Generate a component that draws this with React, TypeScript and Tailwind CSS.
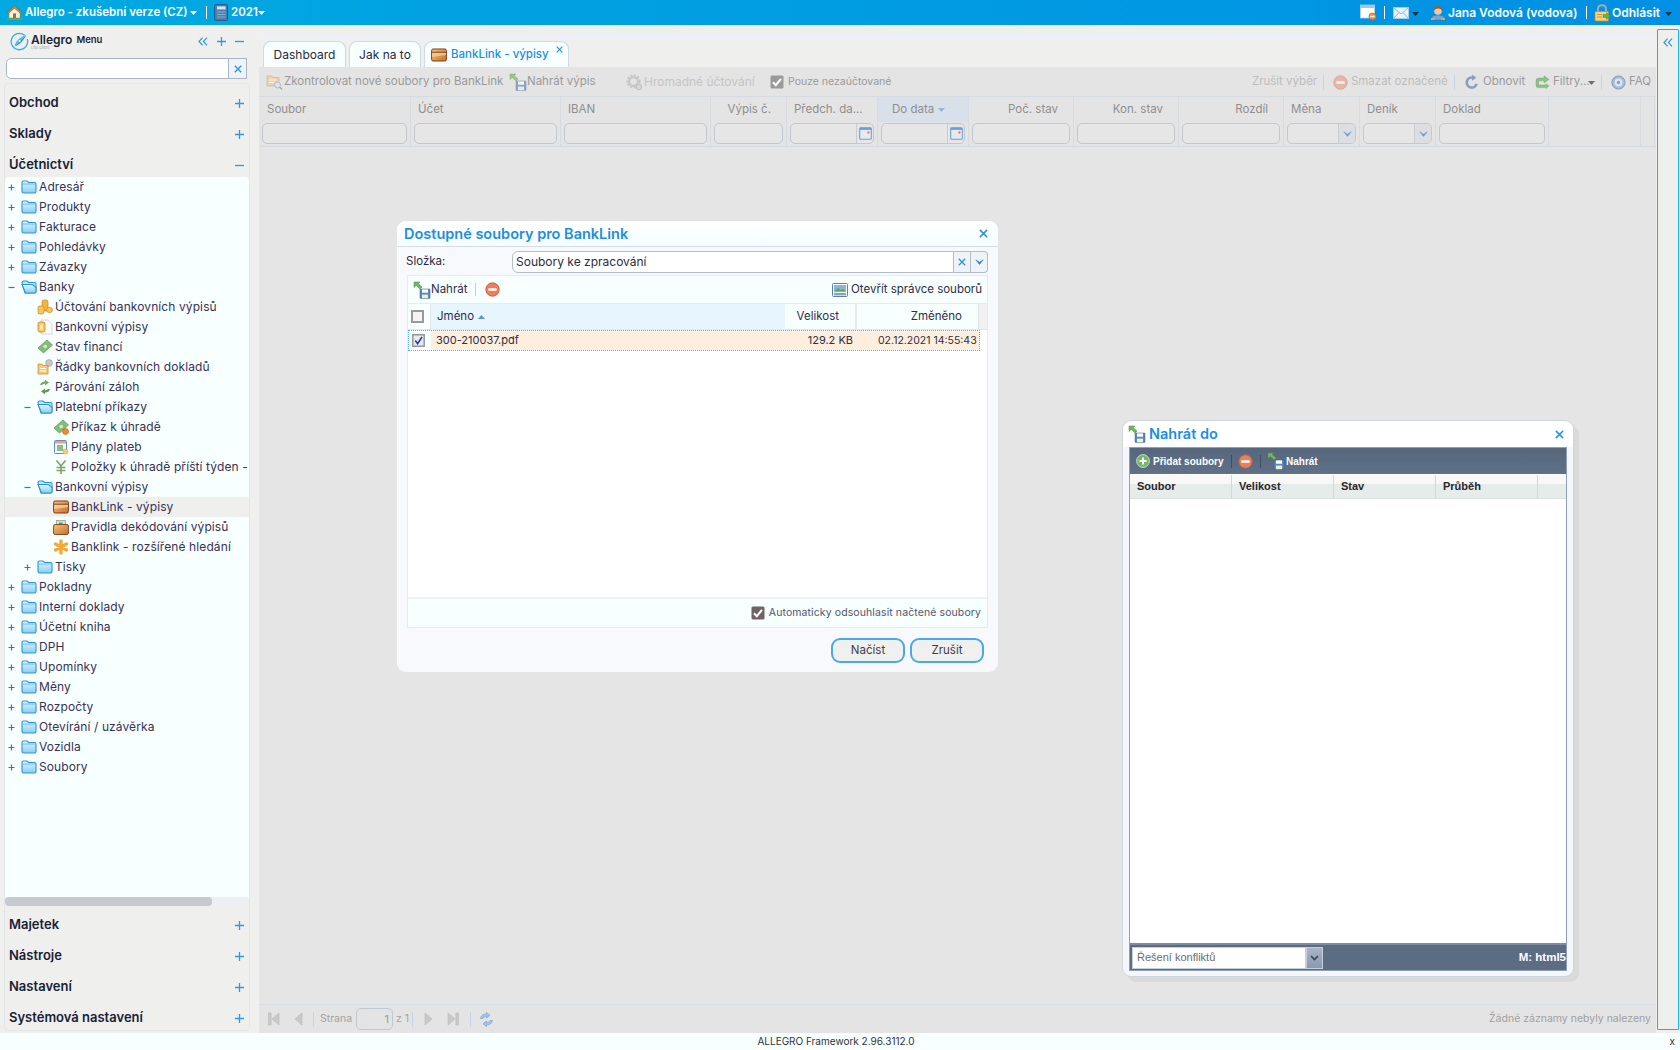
import React from "react";

const Defs = () => (
  <svg width="0" height="0" className="absolute">
    <defs>
      <linearGradient id="fold" x1="0" y1="0" x2="0" y2="1">
        <stop offset="0" stopColor="#e6f6fe" />
        <stop offset="1" stopColor="#85cdf2" />
      </linearGradient>
      <linearGradient id="chest" x1="0" y1="0" x2="1" y2="1">
        <stop offset="0" stopColor="#f3c27c" />
        <stop offset="1" stopColor="#c9702f" />
      </linearGradient>
    </defs>
  </svg>
);

const Folder = () => (
  <svg width="16" height="14" viewBox="0 0 16 14" className="shrink-0">
    <path d="M1 2.5Q1 1 2.5 1H6L7.5 2.5H13.5Q15 2.5 15 4V11.5Q15 13 13.5 13H2.5Q1 13 1 11.5Z" fill="url(#fold)" stroke="#2b96d0" strokeWidth="1.1" />
    <path d="M1.5 4H14.5" stroke="#4fb2e4" strokeWidth="0.8" />
  </svg>
);
const FolderOpen = () => (
  <svg width="16" height="14" viewBox="0 0 16 14" className="shrink-0">
    <path d="M1 2.5Q1 1 2.5 1H6L7.5 2.5H13.5Q15 2.5 15 4V11.5Q15 13 13.5 13H4Z" fill="#bfe6fa" stroke="#2b96d0" strokeWidth="1.1" />
    <path d="M1 4.5H11.5L15 7.5V11.5Q15 13 13.5 13H4.5Z" fill="url(#fold)" stroke="#2b96d0" strokeWidth="1.1" />
  </svg>
);
const Coins = () => (
  <svg width="16" height="16" viewBox="0 0 16 16" className="shrink-0">
    <rect x="5" y="1" width="6" height="11" rx="2" fill="#f2b640" stroke="#c98b20" strokeWidth="0.7" />
    <rect x="1" y="7" width="6" height="8" rx="2" fill="#f5c65c" stroke="#c98b20" strokeWidth="0.7" />
    <ellipse cx="12.5" cy="11" rx="3" ry="2.6" fill="#f5c65c" stroke="#c98b20" strokeWidth="0.7" />
  </svg>
);
const DocCoin = () => (
  <svg width="16" height="16" viewBox="0 0 16 16" className="shrink-0">
    <path d="M4 1H11L15 5V15H4Z" fill="#fbfbf8" stroke="#cfcfcf" strokeWidth="0.8" />
    <rect x="1" y="3" width="7" height="10" rx="2" fill="#f6c76a" stroke="#d58f25" strokeWidth="0.9" />
    <rect x="3.2" y="5.5" width="2.6" height="5" fill="#fff0c4" />
  </svg>
);
const Money = ({ badge }: { badge?: boolean }) => (
  <svg width="16" height="16" viewBox="0 0 16 16" className="shrink-0">
    <path d="M1 9L10 1L15.5 6L6.5 14Z" fill="#86bc7a" stroke="#5d9a55" strokeWidth="0.7" />
    <circle cx="8.2" cy="7.5" r="1.8" fill="#d7ecc9" />
    {badge && <circle cx="12.5" cy="12.5" r="3" fill="#ef8b33" stroke="#b85f16" strokeWidth="0.6" />}
  </svg>
);
const RowsDoc = () => (
  <svg width="16" height="16" viewBox="0 0 16 16" className="shrink-0">
    <circle cx="12" cy="4" r="3.4" fill="#c8c8c8" stroke="#9a9a9a" strokeWidth="0.6" />
    <path d="M1 5H5L6 6.5H11V15H1Z" fill="#f8c878" stroke="#d58f25" strokeWidth="0.8" />
    <path d="M3 9.5H9M3 12H9" stroke="#fff" strokeWidth="1" />
  </svg>
);
const Swap = () => (
  <svg width="16" height="16" viewBox="0 0 16 16" className="shrink-0">
    <path d="M3 6Q4 2.5 8 2.5V0.8L12 3.6L8 6.4V4.8Q6 4.8 5 6Z" fill="#6fae5b" />
    <path d="M13 10Q12 13.5 8 13.5V15.2L4 12.4L8 9.6V11.2Q10 11.2 11 10Z" fill="#5d9a55" />
  </svg>
);
const PlanIcon = () => (
  <svg width="16" height="16" viewBox="0 0 16 16" className="shrink-0">
    <rect x="1.5" y="1.5" width="12" height="13" rx="1" fill="#f4f8fc" stroke="#5d8fc8" />
    <rect x="2" y="2" width="11" height="2.5" fill="#f0a35c" />
    <rect x="4" y="6" width="6" height="6" fill="#8db98d" />
    <circle cx="12.5" cy="12.5" r="2.6" fill="#f5cf72" stroke="#d8a334" strokeWidth="0.5" />
  </svg>
);
const Yen = () => (
  <svg width="16" height="16" viewBox="0 0 16 16" className="shrink-0">
    <path d="M3.5 1.5L8 7L12.5 1.5M8 7V15M3.5 8.5H12.5M3.5 11.5H12.5" stroke="#7fa56f" strokeWidth="1.7" fill="none" />
  </svg>
);
const Chest = () => (
  <svg width="16" height="14" viewBox="0 0 16 14" className="shrink-0">
    <rect x="0.6" y="1" width="14.8" height="12" rx="1.5" fill="url(#chest)" stroke="#7a3f18" strokeWidth="1" />
    <path d="M0.8 4.2H15.2" stroke="#7a3f18" strokeWidth="0.9" />
    <path d="M1 5H15V7L1 9Z" fill="#f7d59e" opacity="0.7" />
  </svg>
);
const ChestDoc = () => (
  <svg width="16" height="15" viewBox="0 0 16 15" className="shrink-0">
    <rect x="3.5" y="0.6" width="9" height="7" fill="#cfe3ce" stroke="#7e9a86" strokeWidth="0.7" />
    <rect x="6" y="2.5" width="3.5" height="2.6" fill="#5a9a5a" />
    <rect x="0.6" y="4.5" width="14.8" height="10" rx="1.5" fill="url(#chest)" stroke="#7a3f18" strokeWidth="0.9" />
  </svg>
);
const Star = () => (
  <svg width="16" height="16" viewBox="0 0 16 16" className="shrink-0">
    <g stroke="#f3a93c" strokeWidth="3.4" strokeLinecap="round">
      <path d="M8 2V14M2.5 5L13.5 11M2.5 11L13.5 5" />
    </g>
  </svg>
);
const Upload = ({ dim }: { dim?: boolean }) => (
  <svg width="18" height="18" viewBox="0 0 18 18" className="shrink-0" opacity={dim ? 0.65 : 1}>
    <path d="M1 1H7L5.2 2.6L9 6L7 8L3.2 4.4L1 6.5Z" fill="#74b35f" stroke="#4f8f42" strokeWidth="0.5" />
    <rect x="7" y="8" width="10" height="9.4" rx="0.6" fill="#5b88bd" stroke="#39608f" strokeWidth="0.5" />
    <rect x="9" y="8.4" width="6" height="3.3" fill="#fff" />
    <rect x="9" y="13.6" width="6" height="3.6" fill="#eef0d5" />
  </svg>
);
const MinusCircle = ({ dim }: { dim?: boolean }) => (
  <svg width="15" height="15" viewBox="0 0 15 15" className="shrink-0" opacity={dim ? 0.45 : 1}>
    <circle cx="7.5" cy="7.5" r="6.7" fill="#e9805d" stroke="#cb5a3c" strokeWidth="0.9" />
    <rect x="3.3" y="6.2" width="8.4" height="2.6" rx="0.6" fill="#fff" />
  </svg>
);
const PlusCircle = () => (
  <svg width="14" height="14" viewBox="0 0 14 14" className="shrink-0">
    <circle cx="7" cy="7" r="6.4" fill="#76b56a" stroke="#cfe8c8" strokeWidth="0.9" />
    <path d="M7 3.4V10.6M3.4 7H10.6" stroke="#fff" strokeWidth="2" />
  </svg>
);
const Check = ({ color = "#8b8b8b", className = "" }: { color?: string; className?: string }) => (
  <svg width="14" height="14" viewBox="0 0 14 14" className={"shrink-0 " + className}>
    <rect x="0.5" y="0.5" width="13" height="13" rx="1.5" fill={color} />
    <path d="M3 7.3L5.8 10.2L11 3.8" stroke="#fff" strokeWidth="2.1" fill="none" />
  </svg>
);
const Caret = ({ color = "#fff", className = "" }: { color?: string; className?: string }) => (
  <svg width="7" height="4" viewBox="0 0 7 4" className={"shrink-0 " + className}>
    <path d="M0 0H7L3.5 4Z" fill={color} />
  </svg>
);
const XMark = ({ size = 10, color = "#2b94dc" }: { size?: number; color?: string }) => (
  <svg width={size} height={size} viewBox="0 0 10 10" className="shrink-0">
    <path d="M1 1L9 9M9 1L1 9" stroke={color} strokeWidth="1.7" />
  </svg>
);
const Plus = ({ size = 9, w = 1.3 }: { size?: number; w?: number }) => (
  <svg width={size} height={size} viewBox="0 0 9 9" className="shrink-0">
    <path d="M4.5 0V9M0 4.5H9" stroke="#2f9ae0" strokeWidth={w} />
  </svg>
);
const TreePlus = () => (
  <svg width="7" height="7" viewBox="0 0 7 7" className="shrink-0">
    <path d="M3.5 0.5V6.5M0.5 3.5H6.5" stroke="#1f7fd0" strokeWidth="1.2" />
  </svg>
);
const TreeMinus = () => (
  <svg width="7" height="7" viewBox="0 0 7 7" className="shrink-0">
    <path d="M0.5 3.5H6.5" stroke="#1f7fd0" strokeWidth="1.2" />
  </svg>
);
const Minus = ({ size = 9, w = 1.3 }: { size?: number; w?: number }) => (
  <svg width={size} height={size} viewBox="0 0 9 9" className="shrink-0">
    <path d="M0 4.5H9" stroke="#2f9ae0" strokeWidth={w} />
  </svg>
);
const DoubleLeft = () => (
  <svg width="10" height="9" viewBox="0 0 10 9" className="shrink-0">
    <path d="M4.6 0.6L1 4.5L4.6 8.4M9 0.6L5.4 4.5L9 8.4" stroke="#2f9ae0" strokeWidth="1.2" fill="none" />
  </svg>
);
const Down = ({ color = "#2b80cc" }: { color?: string }) => (
  <svg width="9" height="6" viewBox="0 0 9 6" className="shrink-0">
    <path d="M0.8 0.8L4.5 3.2L8.2 0.8L4.5 5.4Z" fill={color} stroke={color} strokeWidth="0.6" />
  </svg>
);
const Home = () => (
  <svg width="17" height="17" viewBox="0 0 17 17" className="shrink-0">
    <path d="M3 8V14H14V8L8.5 3Z" fill="#fbf1dd" stroke="#b98650" strokeWidth="0.6" />
    <path d="M0.8 9L8.5 1.6L16.2 9L14.6 9.6L8.5 4.2L2.4 9.6Z" fill="#d8803a" stroke="#98521d" strokeWidth="0.5" />
    <rect x="7" y="9.4" width="3" height="4.6" fill="#a66a35" />
    <path d="M1 15H16" stroke="#6aa84f" strokeWidth="1.8" />
  </svg>
);
const Book = () => (
  <svg width="14" height="17" viewBox="0 0 14 17" className="shrink-0">
    <rect x="0.6" y="0.6" width="12.8" height="15.8" rx="1" fill="#4e7fb0" stroke="#1e4a76" strokeWidth="0.8" />
    <rect x="3" y="2.4" width="8.6" height="3" fill="#d6e5f2" />
    <path d="M3 8H11.5M3 10.5H11.5M3 13H11.5" stroke="#8db2d4" strokeWidth="0.9" />
  </svg>
);
const Win = () => (
  <svg width="17" height="17" viewBox="0 0 17 17" className="shrink-0">
    <rect x="0.5" y="1" width="14" height="13" fill="#fff" stroke="#c9d6e2" strokeWidth="0.7" />
    <rect x="0.5" y="1" width="14" height="3" fill="#9ec7ea" />
    <circle cx="12.5" cy="12.5" r="3.6" fill="#ec8a3a" stroke="#b75f17" strokeWidth="0.5" />
    <rect x="10.3" y="11.7" width="4.4" height="1.6" fill="#fff" />
  </svg>
);
const Mail = () => (
  <svg width="16" height="12" viewBox="0 0 16 12" className="shrink-0">
    <rect x="0.5" y="0.5" width="15" height="11" fill="#e9f3fb" stroke="#a8cbe8" />
    <path d="M0.8 0.8L8 7L15.2 0.8M0.8 11.2L6 5.5M15.2 11.2L10 5.5" stroke="#7fb0dc" strokeWidth="0.9" fill="none" />
  </svg>
);
const UserI = () => (
  <svg width="16" height="16" viewBox="0 0 16 16" className="shrink-0">
    <path d="M1 15Q1 10 8 10Q15 10 15 15Z" fill="#6fa6dc" stroke="#2e6fb1" strokeWidth="0.5" />
    <circle cx="8" cy="6" r="3.8" fill="#f3c9a5" />
    <path d="M3.8 5.5Q4 1 8 1Q12 1 12.2 5.5Q10 3.2 8 3.6Q6 3.6 3.8 5.5Z" fill="#a55a25" />
    <path d="M1 15H5V13H1ZM11 15H15V13H11Z" fill="#e7a14e" />
  </svg>
);
const Lock = () => (
  <svg width="17" height="18" viewBox="0 0 17 18" className="shrink-0">
    <path d="M4 8V5Q4 1.2 8 1.2Q12 1.2 12 5V8" fill="none" stroke="#a9a9a9" strokeWidth="2" />
    <rect x="1" y="7.5" width="13.5" height="9.5" rx="1" fill="#f6d37c" stroke="#bd8c1f" strokeWidth="0.7" />
    <path d="M3 10.5H8M3 13H8" stroke="#bd8c1f" strokeWidth="0.8" />
    <path d="M9 10.5H12.5V8.5L16.5 12L12.5 15.5V13.5H9Z" fill="#65ad4f" stroke="#3f8131" strokeWidth="0.4" />
  </svg>
);
const Logo = () => (
  <svg width="19" height="19" viewBox="0 0 19 19" className="shrink-0">
    <path d="M14.6 3.2A8.2 8.2 0 1 0 17.2 7" fill="none" stroke="#2db2e8" strokeWidth="1.3" />
    <path d="M4.5 14.5L16.5 2.5Q13 9.5 8.5 12.5Q6.5 13.8 4.5 14.5Z" fill="#1696d6" />
    <path d="M16.5 2.5Q9.5 5.5 6.5 9.5Q5 11.8 4.5 14.5Z" fill="#57b9e6" />
    <circle cx="9.6" cy="9" r="1" fill="#fff" />
  </svg>
);
const FolderSearch = () => (
  <svg width="17" height="17" viewBox="0 0 17 17" className="shrink-0" opacity="0.6">
    <path d="M1 2H6L7 3.5H13V12H1Z" fill="#f2c98b" stroke="#c7935a" strokeWidth="0.7" />
    <path d="M3 6H10M3 8.5H8" stroke="#fff" strokeWidth="1.1" />
    <circle cx="11.5" cy="11" r="3" fill="#d6e6f2" stroke="#7d9cb8" strokeWidth="0.9" />
    <path d="M13.6 13L16 15.5" stroke="#7d8a96" strokeWidth="1.5" />
  </svg>
);
const Gear = () => (
  <svg width="17" height="17" viewBox="0 0 17 17" className="shrink-0" opacity="0.6">
    <circle cx="7.5" cy="7.5" r="4.4" fill="none" stroke="#b4b4b4" strokeWidth="2.2" />
    <circle cx="7.5" cy="7.5" r="6.2" fill="none" stroke="#b4b4b4" strokeWidth="1.8" strokeDasharray="2 1.6" />
    <circle cx="13" cy="13" r="2.8" fill="#cfcfcf" stroke="#a8a8a8" strokeWidth="1" />
  </svg>
);
const Refresh = () => (
  <svg width="15" height="16" viewBox="0 0 15 16" className="shrink-0">
    <path d="M8.6 3.6A5 5 0 1 0 12.6 9.8" fill="none" stroke="#8b9fbb" strokeWidth="2.6" />
    <path d="M8 0.6L12.4 3.8L8 6.8Z" fill="#8b9fbb" />
  </svg>
);
const Filter = () => (
  <svg width="15" height="15" viewBox="0 0 15 15" className="shrink-0">
    <path d="M1 9V6Q1 3 4 3H9V0.8L14 4.4L9 8V5.8H5Q3.6 5.8 3.6 7V10H11V8.8L14 11L11 13.5V12.6H3Q1 12.6 1 10Z" fill="#8cc184" stroke="#6ba462" strokeWidth="0.4" />
  </svg>
);
const Faq = () => (
  <svg width="15" height="15" viewBox="0 0 15 15" className="shrink-0">
    <circle cx="7.5" cy="7.5" r="6.6" fill="#a6bdd7" stroke="#7e9abb" strokeWidth="0.9" />
    <circle cx="7.5" cy="7.5" r="4" fill="#dbe5f0" />
    <circle cx="7.5" cy="7.5" r="1.7" fill="#86a2c2" />
  </svg>
);
const CalBtn = () => (
  <svg width="13" height="13" viewBox="0 0 13 13" className="shrink-0">
    <rect x="0.7" y="0.7" width="11.6" height="11.6" rx="1" fill="#e7eaee" stroke="#6d9ddb" strokeWidth="1.1" />
    <rect x="0.7" y="0.7" width="11.6" height="2.2" fill="#6d9ddb" />
    <circle cx="9.4" cy="5.5" r="1.2" fill="#e08b52" />
  </svg>
);
const Picture = () => (
  <svg width="16" height="14" viewBox="0 0 16 14" className="shrink-0">
    <rect x="0.5" y="0.5" width="15" height="13" rx="1" fill="#fff" stroke="#5b83a8" />
    <rect x="2" y="2" width="12" height="6.6" fill="#7fb6e2" />
    <path d="M2 8.6L6 5L9 7L11 5.8L14 8.6Z" fill="#6da256" />
    <rect x="2" y="9.8" width="12" height="2.6" fill="#8aa3ba" />
  </svg>
);
const PagerFirst = ({ flip }: { flip?: boolean }) => (
  <svg width="12" height="14" viewBox="0 0 12 14" className={"shrink-0 " + (flip ? "-scale-x-100" : "")}>
    <rect x="0.5" y="1" width="2.6" height="12" fill="#c9c9c9" stroke="#b5b5b5" strokeWidth="0.5" />
    <path d="M11 1V13L4 7Z" fill="#c9c9c9" stroke="#b5b5b5" strokeWidth="0.5" />
  </svg>
);
const PagerPrev = ({ flip }: { flip?: boolean }) => (
  <svg width="9" height="14" viewBox="0 0 9 14" className={"shrink-0 " + (flip ? "-scale-x-100" : "")}>
    <path d="M8 1V13L1 7Z" fill="#c9c9c9" stroke="#b5b5b5" strokeWidth="0.5" />
  </svg>
);
const PagerRefresh = () => (
  <svg width="15" height="15" viewBox="0 0 15 15" className="shrink-0">
    <path d="M1.5 6.5Q2.5 2 7.5 2V0.5L11 3.2L7.5 6V4.2Q5 4.2 4 6.5Z" fill="#a8c4e6" stroke="#6f9ccf" strokeWidth="0.6" />
    <path d="M13.5 8.5Q12.5 13 7.5 13V14.5L4 11.8L7.5 9V10.8Q10 10.8 11 8.5Z" fill="#a8c4e6" stroke="#6f9ccf" strokeWidth="0.6" />
  </svg>
);

type Node = { t: string; lvl: 0 | 1 | 2; exp?: "+" | "-"; icon: React.ReactNode; sel?: boolean };
const F = <Folder />;
const FO = <FolderOpen />;
const tree: Node[] = [
  { t: "Adresář", lvl: 0, exp: "+", icon: F },
  { t: "Produkty", lvl: 0, exp: "+", icon: F },
  { t: "Fakturace", lvl: 0, exp: "+", icon: F },
  { t: "Pohledávky", lvl: 0, exp: "+", icon: F },
  { t: "Závazky", lvl: 0, exp: "+", icon: F },
  { t: "Banky", lvl: 0, exp: "-", icon: FO },
  { t: "Účtování bankovních výpisů", lvl: 1, icon: <Coins /> },
  { t: "Bankovní výpisy", lvl: 1, icon: <DocCoin /> },
  { t: "Stav financí", lvl: 1, icon: <Money /> },
  { t: "Řádky bankovních dokladů", lvl: 1, icon: <RowsDoc /> },
  { t: "Párování záloh", lvl: 1, icon: <Swap /> },
  { t: "Platební příkazy", lvl: 1, exp: "-", icon: FO },
  { t: "Příkaz k úhradě", lvl: 2, icon: <Money badge /> },
  { t: "Plány plateb", lvl: 2, icon: <PlanIcon /> },
  { t: "Položky k úhradě příští týden -", lvl: 2, icon: <Yen /> },
  { t: "Bankovní výpisy", lvl: 1, exp: "-", icon: FO },
  { t: "BankLink - výpisy", lvl: 2, icon: <Chest />, sel: true },
  { t: "Pravidla dekódování výpisů", lvl: 2, icon: <ChestDoc /> },
  { t: "Banklink - rozšířené hledání", lvl: 2, icon: <Star /> },
  { t: "Tisky", lvl: 1, exp: "+", icon: F },
  { t: "Pokladny", lvl: 0, exp: "+", icon: F },
  { t: "Interní doklady", lvl: 0, exp: "+", icon: F },
  { t: "Účetní kniha", lvl: 0, exp: "+", icon: F },
  { t: "DPH", lvl: 0, exp: "+", icon: F },
  { t: "Upomínky", lvl: 0, exp: "+", icon: F },
  { t: "Měny", lvl: 0, exp: "+", icon: F },
  { t: "Rozpočty", lvl: 0, exp: "+", icon: F },
  { t: "Otevírání / uzávěrka", lvl: 0, exp: "+", icon: F },
  { t: "Vozidla", lvl: 0, exp: "+", icon: F },
  { t: "Soubory", lvl: 0, exp: "+", icon: F },
];
const lvlPad = { 0: "pl-[3px]", 1: "pl-[19px]", 2: "pl-[35px]" } as const;

const TreeRow = ({ n }: { n: Node }) => (
  <div className={"flex h-5 items-center whitespace-nowrap text-[12px] tracking-[0.1px] text-[#3a3152] " + lvlPad[n.lvl] + (n.sel ? " bg-[#efefee]" : "")}>
    <span className="flex w-[13px] shrink-0 items-center">
      {n.exp === "+" && <TreePlus />}
      {n.exp === "-" && <TreeMinus />}
    </span>
    <span className="flex w-[18px] shrink-0 items-center">{n.icon}</span>
    <span>{n.t}</span>
  </div>
);

const Acc = ({ t, open }: { t: string; open?: boolean }) => (
  <div className="mt-[7px] flex h-6 items-center justify-between pl-[4px] pr-[5px] first:mt-0">
    <span className="text-[13px] font-semibold text-[#182235]">{t}</span>
    {open ? <Minus size={9} /> : <Plus size={9} />}
  </div>
);

type Col = { w: string; label: string; right?: boolean; pl?: string; kind?: "date" | "combo" | "none"; active?: boolean };
const cols: Col[] = [
  { w: "w-[152px]", label: "Soubor", pl: "pl-[8px]" },
  { w: "w-[150px]", label: "Účet", pl: "pl-[7px]" },
  { w: "w-[150px]", label: "IBAN", pl: "pl-[7px]" },
  { w: "w-[76px]", label: "Výpis č.", right: true },
  { w: "w-[91px]", label: "Předch. da...", pl: "pl-[7px]", kind: "date" },
  { w: "w-[91px]", label: "Do data", pl: "pl-[14px]", kind: "date", active: true },
  { w: "w-[105px]", label: "Poč. stav", right: true },
  { w: "w-[105px]", label: "Kon. stav", right: true },
  { w: "w-[105px]", label: "Rozdíl", right: true },
  { w: "w-[76px]", label: "Měna", pl: "pl-[7px]", kind: "combo" },
  { w: "w-[76px]", label: "Deník", pl: "pl-[7px]", kind: "combo" },
  { w: "w-[113px]", label: "Doklad", pl: "pl-[7px]" },
  { w: "w-[92px]", label: "", kind: "none" },
  { w: "w-[14px]", label: "", kind: "none" },
];

const GridCol = ({ c }: { c: Col }) => (
  <div className={"flex shrink-0 flex-col border-r border-[#d6dbe0] " + c.w}>
    <div className={"flex h-[25px] items-center whitespace-nowrap text-[11.5px] text-[#8f8f8f] " + (c.right ? "justify-end pr-[15px]" : c.pl ?? "") + (c.active ? " bg-[#d8e0ea]" : "")}>
      {c.label}
      {c.active && <Caret color="#9db5d6" className="ml-[4px]" />}
    </div>
    {c.kind !== "none" && (
      <div className="mx-[3px] mt-[1px] flex h-[21px] overflow-hidden rounded-[5px] border border-[#c2c8d0] bg-[#e6e6e6]">
        <div className="flex-1" />
        {c.kind === "date" && (
          <div className="flex w-[17px] items-center justify-center border-l border-[#c8ccd2]">
            <CalBtn />
          </div>
        )}
        {c.kind === "combo" && (
          <div className="flex w-[17px] items-center justify-center border-l border-[#c8ccd2] bg-[#dcdee2]">
            <Down color="#6a9ed8" />
          </div>
        )}
      </div>
    )}
  </div>
);

const Sep = ({ c = "bg-[#c8d5e6]", h = "h-[15px]" }: { c?: string; h?: string }) => <span className={"block w-px shrink-0 " + c + " " + h} />;

const Sidebar = () => (
  <aside className="flex w-[259px] shrink-0 flex-col bg-[#efefee]">
    <div className="flex h-[33px] items-center pl-[10px] pr-[15px]">
      <Logo />
      <div className="ml-[2px] flex flex-col leading-none">
        <span className="text-[12px] font-semibold leading-[13px] text-[#1c2536]">Allegro</span>
        <span className="text-[4px] leading-[4px] text-[#9ba3ad]">Lite client</span>
      </div>
      <span className="ml-[4px] mb-[3px] text-[9.5px] font-semibold text-[#1c2536]">Menu</span>
      <span className="ml-auto flex items-center gap-[9px]">
        <DoubleLeft />
        <Plus size={9} />
        <Minus size={9} />
      </span>
    </div>
    <div className="ml-[6px] flex h-[21px] w-[241px]">
      <div className="flex-1 rounded-l-[5px] border border-[#a9b5c6] bg-white" />
      <div className="flex w-[18px] items-center justify-center border border-l-0 border-[#a9b5c6] bg-[#f0f3f5]">
        <XMark size={8} />
      </div>
    </div>
    <div className="ml-[4px] mt-[4px] flex h-[948px] w-[246px] flex-col rounded-[4px] border border-[#e3e7ea] pt-[7px]">
      <div className="flex flex-col">
        <Acc t="Obchod" />
        <Acc t="Sklady" />
        <Acc t="Účetnictví" open />
      </div>
      <div className="flex-1 overflow-hidden rounded-t-[4px] bg-[#f7ffff]">
        {tree.map((n, i) => (
          <TreeRow key={i} n={n} />
        ))}
      </div>
      <div className="flex h-[9px] rounded-[4px] bg-[#edeff2]">
        <div className="w-[207px] rounded-[4px] bg-[#c6c9cd]" />
      </div>
      <div className="flex flex-col pt-[7px]">
        <Acc t="Majetek" />
        <Acc t="Nástroje" />
        <Acc t="Nastavení" />
        <Acc t="Systémová nastavení" />
      </div>
    </div>
  </aside>
);

const Tabs = () => (
  <div className="flex h-[42px] shrink-0 flex-col">
    <div className="mt-[9px] h-[6px] bg-[#eff0f6]" />
    <div className="mt-[1px] flex h-[26px] items-end gap-[3px] pl-[4px]">
      <div className="flex h-[26px] w-[83px] items-center justify-center rounded-t-[8px] border border-b-0 border-[#d0d8e2] bg-[#f7ffff] text-[12px] text-[#2a2a3a]">Dashboard</div>
      <div className="flex h-[26px] w-[72px] items-center justify-center rounded-t-[8px] border border-b-0 border-[#d0d8e2] bg-[#f7ffff] text-[12px] text-[#2a2a3a]">Jak na to</div>
      <div className="relative flex h-[26px] w-[145px] items-center rounded-t-[8px] border border-b-0 border-[#d0d8e2] bg-[#f7ffff] pl-[6px] text-[11.5px] font-medium text-[#1c8fe0]">
        <Chest />
        <span className="ml-[4px]">BankLink - výpisy</span>
        <span className="absolute right-[5px] top-[4px]">
          <XMark size={7} />
        </span>
      </div>
    </div>
  </div>
);

const Toolbar = () => (
  <div className="flex h-[29px] shrink-0 items-center whitespace-nowrap bg-[#e4e4e4] pl-[7px] pr-[5px] pt-[1px] text-[11.5px] text-[#9a9a9a]">
    <FolderSearch />
    <span className="ml-[1px] w-[225px]">Zkontrolovat nové soubory pro BankLink</span>
    <Upload dim />
    <span className="w-[97px]">Nahrát výpis</span>
    <span className="ml-[2px]"><Gear /></span>
    <span className="ml-[1px] w-[126px] text-[12px] text-[#c4c4c4]">Hromadné účtování</span>
    <Check color="#9a9a9a" />
    <span className="ml-[4px] w-[100px] text-[10.5px]">Pouze nezaúčtované</span>
    <span className="ml-auto w-[64px] text-[#bdbdbd]">Zrušit výběr</span>
    <span className="ml-[7px]"><Sep /></span>
    <span className="ml-[9px]"><MinusCircle dim /></span>
    <span className="ml-[3px] w-[96px] text-[#bdbdbd]">Smazat označené</span>
    <span className="ml-[7px]"><Sep /></span>
    <span className="ml-[9px]"><Refresh /></span>
    <span className="ml-[4px] w-[44px]">Obnovit</span>
    <span className="ml-[8px]"><Filter /></span>
    <span className="ml-[3px] w-[33px]">Filtry...</span>
    <Caret color="#776a6a" className="ml-[2px] mt-[1px]" />
    <span className="ml-[6px]"><Sep /></span>
    <span className="ml-[9px]"><Faq /></span>
    <span className="ml-[3px]">FAQ</span>
  </div>
);

const Pager = () => (
  <div className="flex h-[29px] shrink-0 items-center whitespace-nowrap border-t border-[#d8dde6] bg-[#e4e4e4] pl-[9px] pr-[5px] text-[11px] text-[#a3a3a3]">
    <PagerFirst />
    <span className="ml-[14px]"><PagerPrev /></span>
    <span className="ml-[10px]"><Sep /></span>
    <span className="ml-[6px] w-[36px] text-[10.5px]">Strana</span>
    <span className="flex h-[22px] w-[37px] items-center justify-end rounded-[5px] border border-[#c2c8d0] pr-[3px] text-[#9a9a9a]">1</span>
    <span className="ml-[3px] w-[16px] text-[10.5px]">z 1</span>
    <Sep />
    <span className="ml-[11px]"><PagerPrev flip /></span>
    <span className="ml-[14px]"><PagerFirst flip /></span>
    <span className="ml-[11px]"><Sep /></span>
    <span className="ml-[8px]"><PagerRefresh /></span>
    <span className="ml-auto text-[10.5px] text-[#a0a0a0]">Žádné záznamy nebyly nalezeny</span>
  </div>
);

const DialogFiles = () => (
  <div className="absolute left-[397px] top-[221px] flex h-[451px] w-[601px] flex-col rounded-[9px] bg-[#f7f9fd]">
    <div className="flex h-[26px] shrink-0 items-center justify-between rounded-t-[9px] border-b border-[#d6dde6] bg-gradient-to-b from-white to-[#f5fdff] pl-[7px] pr-[10px]">
      <span className="text-[14.5px] font-semibold text-[#1c8fe0]">Dostupné soubory pro BankLink</span>
      <XMark size={9} />
    </div>
    <div className="flex h-[26px] shrink-0 items-center pl-[9px] pr-[9px] pt-[4px]">
      <span className="w-[106px] text-[11.5px] text-[#2c2c3c]">Složka:</span>
      <div className="flex h-[22px] w-[442px] items-center rounded-l-[6px] border border-[#b2bccb] bg-white pl-[3px] text-[12px] text-[#2c2c3c]">Soubory ke zpracování</div>
      <div className="flex h-[22px] w-[17px] items-center justify-center border-y border-r border-[#b2bccb] bg-[#f0f3f5]">
        <XMark size={8} />
      </div>
      <div className="flex h-[22px] w-[17px] items-center justify-center rounded-r-[4px] border-y border-r border-[#b2bccb] bg-[#f0f3f5]">
        <Down color="#2b80cc" />
      </div>
    </div>
    <div className="ml-[10px] mt-[2px] flex h-[353px] w-[581px] flex-col border border-[#e6ebf0] bg-white">
      <div className="flex h-[28px] shrink-0 items-center whitespace-nowrap border-b border-[#e6ecf1] bg-[#f7ffff] pl-[5px] pr-[5px] text-[11.5px] text-[#2f2f44]">
        <Upload />
        <span className="w-[44px]">Nahrát</span>
        <Sep c="bg-[#bcd0e4]" h="h-[13px]" />
        <span className="ml-[9px]"><MinusCircle /></span>
        <span className="ml-auto"><Picture /></span>
        <span className="ml-[3px]">Otevřít správce souborů</span>
      </div>
      <div className="flex h-[26px] shrink-0 items-center whitespace-nowrap border-b border-[#dfe6ec] text-[11.5px] text-[#2f2f44]">
        <div className="flex h-full w-[23px] items-center justify-center border-r border-[#e4e8ec] bg-[#f7ffff] pr-[3px]">
          <span className="block h-[13px] w-[13px] border-2 border-[#9a9a9a] bg-[#f4f4f4]" />
        </div>
        <div className="flex h-full w-[354px] items-center bg-[#e7f5fe] pl-[6px]">
          Jméno
          <Caret color="#5d93cc" className="ml-[4px] rotate-180" />
        </div>
        <div className="flex h-full w-[72px] items-center justify-end border-r-2 border-[#e6eaee] bg-[#f7ffff] pr-[16px]">Velikost</div>
        <div className="flex h-full w-[122px] items-center justify-end border-r border-[#dde2e8] bg-[#f7ffff] pr-[16px]">Změněno</div>
        <div className="h-full flex-1 bg-[#f1f1f0]" />
      </div>
      <div className="flex h-[21px] w-[572px] shrink-0 items-center whitespace-nowrap border border-dotted border-[#55b0e8] text-[11px] text-[#2f2f44]">
        <div className="flex h-full w-[22px] items-center justify-center bg-[#f7ffff] pr-[3px]">
          <svg width="13" height="13" viewBox="0 0 13 13">
            <rect x="0.8" y="0.8" width="11.4" height="11.4" fill="#e9e9ec" stroke="#8e8e94" strokeWidth="1.4" />
            <path d="M3.2 6.5L5.6 9.6L10 3" stroke="#2b3fa8" strokeWidth="1.6" fill="none" />
          </svg>
        </div>
        <div className="flex h-full flex-1 items-center bg-[#feeede] pl-[5px]">
          <span className="flex-1">300-210037.pdf</span>
          <span className="w-[65px] text-right">129.2 KB</span>
          <span className="ml-[25px] w-[97px] text-right text-[10.5px]">02.12.2021 14:55:43</span>
          <span className="w-[4px]" />
        </div>
      </div>
      <div className="flex-1" />
      <div className="flex h-[30px] shrink-0 items-center justify-end whitespace-nowrap border-t-2 border-[#eef1f3] bg-[#f7ffff] pr-[6px] text-[10.5px] tracking-[0.1px] text-[#55556a]">
        <Check color="#6f6363" />
        <span className="ml-[4px]">Automaticky odsouhlasit načtené soubory</span>
      </div>
    </div>
    <div className="mr-[14px] mt-[10px] flex justify-end gap-[5px]">
      <button className="h-[25px] w-[74px] rounded-[9px] border-2 border-[#4aaae6] bg-[#f0f0ef] text-[11.5px] text-[#3c3c4c]">Načíst</button>
      <button className="h-[25px] w-[74px] rounded-[9px] border-2 border-[#4aaae6] bg-[#f0f0ef] text-[11.5px] text-[#3c3c4c]">Zrušit</button>
    </div>
  </div>
);

const DialogUpload = () => (
  <div className="absolute left-[1122px] top-[420px] flex h-[557px] w-[452px] flex-col rounded-[9px] border border-[#cfd6dc] bg-[#f5f7fd] shadow-[5px_5px_0_#dadada]">
    <div className="flex h-[26px] shrink-0 items-center justify-between rounded-t-[9px] bg-white pl-[5px] pr-[9px]">
      <span className="flex items-center">
        <Upload />
        <span className="ml-[3px] text-[14.5px] font-semibold text-[#1c8fe0]">Nahrát do</span>
      </span>
      <XMark size={9} />
    </div>
    <div className="mx-[6px] flex flex-1 flex-col border border-[#8ea0b8] bg-white font-['Liberation_Sans',Arial,sans-serif]">
      <div className="flex h-[26px] shrink-0 items-center whitespace-nowrap bg-gradient-to-b from-[#56677d] to-[#607087] pl-[6px] text-[10px] font-bold text-white">
        <PlusCircle />
        <span className="ml-[3px] w-[71px]">Přidat soubory</span>
        <span className="ml-[7px]"><Sep c="bg-[#3f4d60]" h="h-[13px]" /></span>
        <span className="ml-[6px]"><MinusCircle /></span>
        <span className="ml-[7px]"><Sep c="bg-[#3f4d60]" h="h-[13px]" /></span>
        <span className="ml-[6px]"><Upload /></span>
        <span className="ml-[1px]">Nahrát</span>
      </div>
      <div className="flex h-[25px] shrink-0 border-b border-[#dce2de] pt-[1px] text-[11px] font-bold text-[#26262e]">
        {["Soubor", "Velikost", "Stav", "Průběh", ""].map((h, i) => (
          <div key={i} className={"flex h-full items-center border-r border-[#d3d8d6] bg-gradient-to-b from-[#f8f8f6] from-[40%] to-[#e6ece9] to-[40%] pl-[7px] " + (i === 4 ? "flex-1 border-r-0" : "w-[102px]")}>
            {h}
          </div>
        ))}
      </div>
      <div className="flex-1" />
      <div className="flex h-[27px] shrink-0 items-center justify-between border-t-2 border-[#7c8ba0] bg-[#5c6c82] pl-[2px]">
        <div className="flex h-[22px]">
          <div className="flex w-[174px] items-center border border-[#c9cfd8] bg-white pl-[4px] text-[11px] text-[#6c6c6c]">Řešení konfliktů</div>
          <div className="flex w-[17px] items-center justify-center border border-[#c9cfd8] bg-gradient-to-b from-[#a8b4c8] to-[#8a99b2]">
            <svg width="9" height="6" viewBox="0 0 9 6"><path d="M1 1L4.5 4.5L8 1" stroke="#39465a" strokeWidth="1.7" fill="none" /></svg>
          </div>
        </div>
        <span className="text-[11.5px] font-bold text-white">M: html5</span>
      </div>
    </div>
    <div className="h-[5px] shrink-0" />
  </div>
);

export default function App() {
  return (
    <div className="relative flex h-[1050px] w-[1680px] flex-col overflow-hidden bg-[#efefee] font-[Inter,sans-serif]">
      <Defs />
      <header className="flex h-[25px] shrink-0 items-center whitespace-nowrap bg-gradient-to-r from-[#00a9e0] to-[#0090e4] pl-[6px] pr-[8px] text-[12px] font-semibold text-white">
        <Home />
        <span className="ml-[2px] w-[163px] text-[11.5px]">Allegro - zkušební verze (CZ)</span>
        <Caret className="ml-[2px] mt-[1px]" />
        <span className="ml-[9px] h-[13px] w-px bg-white" />
        <span className="ml-[7px]"><Book /></span>
        <span className="ml-[3px] w-[27px] text-[11.5px]">2021</span>
        <Caret className="mt-[1px]" />
        <span className="ml-auto"><Win /></span>
        <span className="ml-[7px] h-[13px] w-px bg-white" />
        <span className="ml-[8px]"><Mail /></span>
        <Caret color="#12304a" className="ml-[3px] mt-[2px]" />
        <span className="ml-[11px]"><UserI /></span>
        <span className="ml-[2px] w-[131px]">Jana Vodová (vodova)</span>
        <span className="ml-[7px] h-[13px] w-px bg-white" />
        <span className="ml-[7px]"><Lock /></span>
        <span className="ml-[1px] w-[48px]">Odhlásit</span>
        <Caret color="#12304a" className="ml-[5px] mt-[2px]" />
      </header>
      <div className="flex h-[1008px] shrink-0">
        <Sidebar />
        <main className="flex w-[1397px] shrink-0 flex-col">
          <Tabs />
          <div className="flex flex-1 flex-col bg-[#e5e5e5]">
            <Toolbar />
            <div className="flex h-[51px] shrink-0 border-y border-[#d6dbe0] bg-[#e4e4e4]">
              {cols.map((c, i) => (
                <GridCol key={i} c={c} />
              ))}
            </div>
            <div className="flex-1" />
            <Pager />
          </div>
        </main>
        <aside className="ml-px mt-[4px] flex h-[1001px] w-[22px] shrink-0 justify-center rounded-[1px] border border-[#1fb1e0] bg-[#efefee] pt-[8px]">
          <DoubleLeft />
        </aside>
      </div>
      <footer className="flex h-[17px] shrink-0 items-center justify-between bg-[#f7ffff] text-[10px] text-[#333333]">
        <span className="w-[20px]" />
        <span className="ml-[-8px]">ALLEGRO Framework 2.96.3112.0</span>
        <span className="w-[20px] pr-[5px] text-right">x</span>
      </footer>
      <DialogFiles />
      <DialogUpload />
    </div>
  );
}
